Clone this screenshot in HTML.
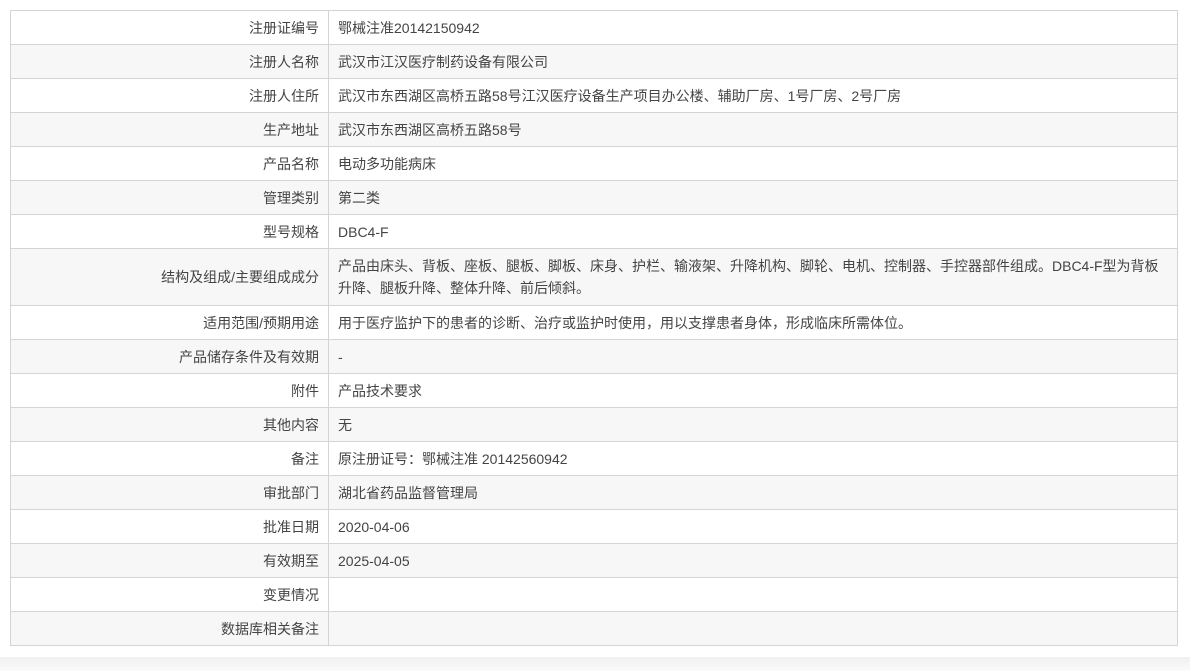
<!DOCTYPE html>
<html><head><meta charset="utf-8"><style>
body{margin:0;background:#fff;width:1190px;height:671px;overflow:hidden;position:relative;font-family:"Liberation Sans","Noto Sans CJK SC",sans-serif;font-size:14px;color:#444}
table{position:absolute;left:10px;top:10px;width:1168px;border-collapse:collapse;border:1px solid #d0d0d0}
td{border:1px solid #d4d4d4;height:34px;padding:0 9px;box-sizing:border-box;line-height:22px}
td.l{width:318px;text-align:right}
tr:nth-child(even) td{background:#f7f7f7}
.b{position:absolute;left:0;top:657px;width:1190px;height:14px;background:linear-gradient(#f0f0f0,#fafafa)}
</style></head><body>
<table>
<tr><td class="l">注册证编号</td><td>鄂械注准20142150942</td></tr>
<tr><td class="l">注册人名称</td><td>武汉市江汉医疗制药设备有限公司</td></tr>
<tr><td class="l">注册人住所</td><td>武汉市东西湖区高桥五路58号江汉医疗设备生产项目办公楼、辅助厂房、1号厂房、2号厂房</td></tr>
<tr><td class="l">生产地址</td><td>武汉市东西湖区高桥五路58号</td></tr>
<tr><td class="l">产品名称</td><td>电动多功能病床</td></tr>
<tr><td class="l">管理类别</td><td>第二类</td></tr>
<tr><td class="l">型号规格</td><td>DBC4-F</td></tr>
<tr><td class="l" style="height:57px">结构及组成/主要组成成分</td><td>产品由床头、背板、座板、腿板、脚板、床身、护栏、输液架、升降机构、脚轮、电机、控制器、手控器部件组成。DBC4-F型为背板升降、腿板升降、整体升降、前后倾斜。</td></tr>
<tr><td class="l">适用范围/预期用途</td><td>用于医疗监护下的患者的诊断、治疗或监护时使用，用以支撑患者身体，形成临床所需体位。</td></tr>
<tr><td class="l">产品储存条件及有效期</td><td>-</td></tr>
<tr><td class="l">附件</td><td>产品技术要求</td></tr>
<tr><td class="l">其他内容</td><td>无</td></tr>
<tr><td class="l">备注</td><td>原注册证号：鄂械注准 20142560942</td></tr>
<tr><td class="l">审批部门</td><td>湖北省药品监督管理局</td></tr>
<tr><td class="l">批准日期</td><td>2020-04-06</td></tr>
<tr><td class="l">有效期至</td><td>2025-04-05</td></tr>
<tr><td class="l">变更情况</td><td></td></tr>
<tr><td class="l">数据库相关备注</td><td></td></tr>
</table>
<div class="b"></div>
</body></html>
